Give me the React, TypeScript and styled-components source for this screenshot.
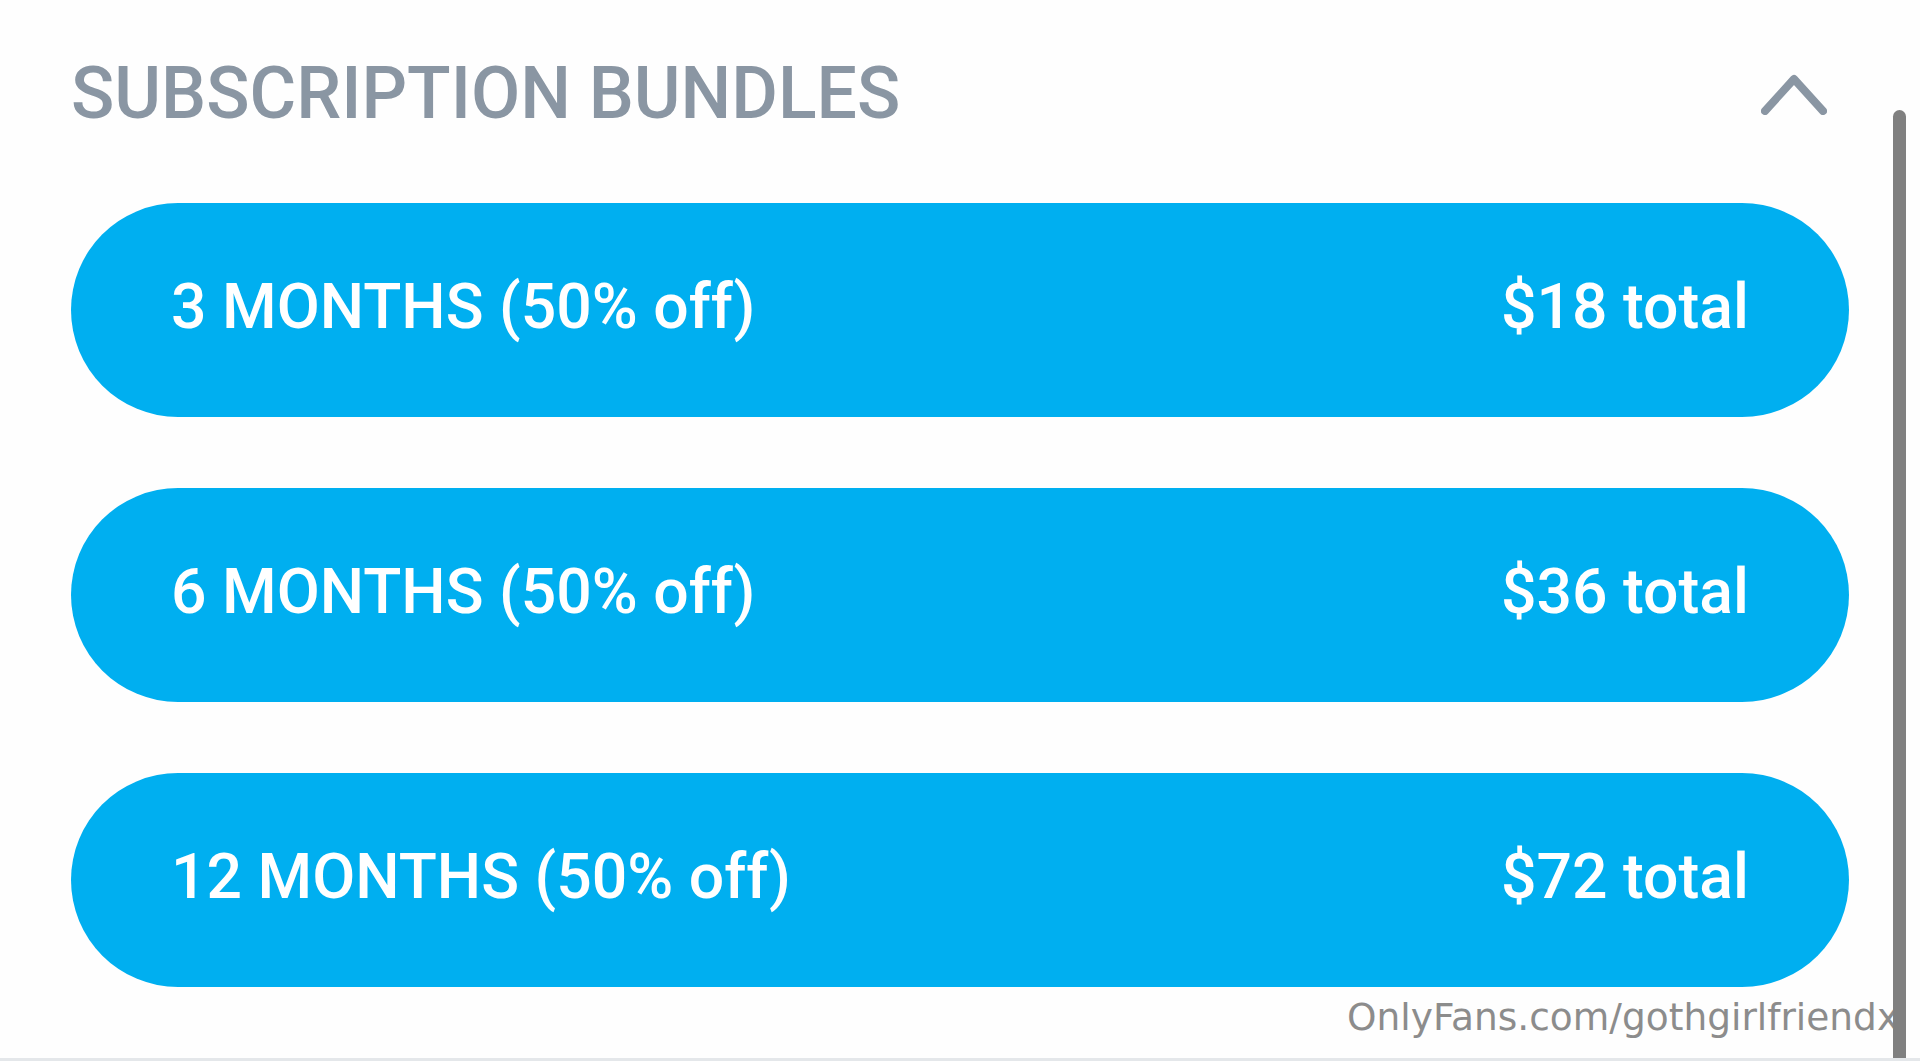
import React from "react";
import styled, { createGlobalStyle } from "styled-components";

const GlobalStyle = createGlobalStyle`
  html, body {
    margin: 0;
    padding: 0;
    background: #fefefe;
    overflow: hidden;
  }
  body {
    font-family: Roboto, "Liberation Sans", sans-serif;
  }
`;

interface Bundle {
  months: number;
  discount: number;
  total: number;
}

const bundles: Bundle[] = [
  { months: 3, discount: 50, total: 18 },
  { months: 6, discount: 50, total: 36 },
  { months: 12, discount: 50, total: 72 },
];

const Page = styled.div`
  position: relative;
  height: 100vh;
  box-sizing: border-box;
  padding: 0 71px;
  border-bottom: 3px solid #e4e7ea;
  background: #fefefe;
`;

const Header = styled.div`
  display: flex;
  align-items: center;
  justify-content: space-between;
  height: 188px;
  padding-right: 20px;
`;

const Title = styled.h2`
  margin: 0;
  font-family: Roboto, "Liberation Sans", sans-serif;
  font-weight: 500;
  font-size: 71.5px;
  line-height: 1;
  color: #8a96a3;
  text-transform: uppercase;
`;

const Toggle = styled.button`
  display: flex;
  align-items: center;
  justify-content: center;
  width: 70px;
  height: 50px;
  padding: 0;
  border: none;
  background: none;
  color: #8a96a3;
  cursor: pointer;
`;

const List = styled.div`
  display: flex;
  flex-direction: column;
  gap: 71px;
  margin-top: 15px;
`;

const BundleButton = styled.button`
  display: flex;
  align-items: center;
  justify-content: space-between;
  height: 214px;
  padding: 0 100px 8px;
  border: none;
  border-radius: 107px;
  background: #00aff0;
  color: #ffffff;
  font-family: Roboto, "Liberation Sans", sans-serif;
  font-weight: 500;
  font-size: 62.5px;
  cursor: pointer;
`;

const Label = styled.span`
  text-transform: uppercase;
`;

const Price = styled.span``;

const Off = styled.span`
  text-transform: none;
`;

const Watermark = styled.div`
  position: absolute;
  left: 1347px;
  top: 995px;
  font-family: "DejaVu Sans", sans-serif;
  font-size: 37.5px;
  color: #8c8c8c;
  white-space: nowrap;
  pointer-events: none;
`;

const ScrollThumb = styled.div`
  position: absolute;
  top: 110px;
  bottom: 0;
  left: 1893px;
  width: 13px;
  border-radius: 7px 7px 0 0;
  background: #808080;
`;

const ChevronUp = () => (
  <svg width="66" height="42" viewBox="0 0 66 42" fill="none">
    <path
      d="M4 38 L33 6 L62 38"
      stroke="currentColor"
      strokeWidth="8"
      strokeLinecap="round"
      strokeLinejoin="round"
    />
  </svg>
);

const App: React.FC = () => {
  return (
    <>
      <GlobalStyle />
      <Page>
        <Header>
          <Title>Subscription bundles</Title>
          <Toggle aria-label="Collapse">
            <ChevronUp />
          </Toggle>
        </Header>
        <List>
          {bundles.map((b) => (
            <BundleButton key={b.months}>
              <Label>
                {b.months} months <Off>({b.discount}% off)</Off>
              </Label>
              <Price>${b.total} total</Price>
            </BundleButton>
          ))}
        </List>
        <Watermark>OnlyFans.com/gothgirlfriendx</Watermark>
        <ScrollThumb />
      </Page>
    </>
  );
};

export default App;
